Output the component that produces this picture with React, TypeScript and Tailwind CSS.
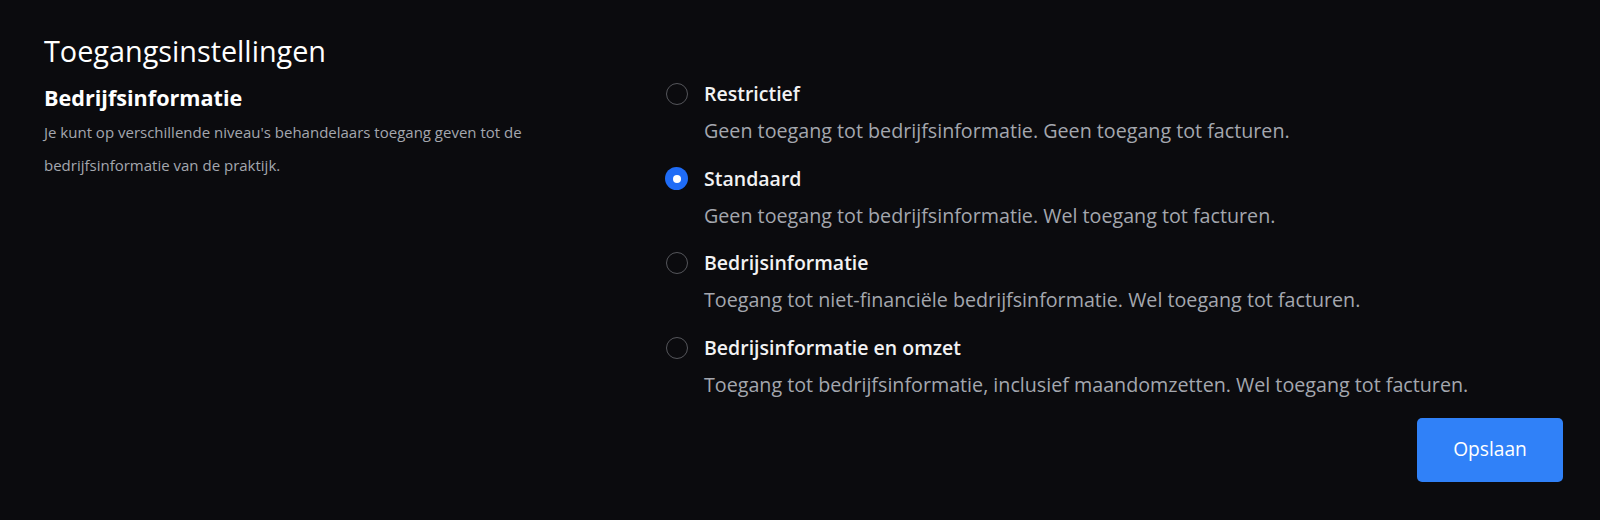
import { useState } from 'react'

const options = [
  { id: 'restrictief', label: 'Restrictief', desc: 'Geen toegang tot bedrijfsinformatie. Geen toegang tot facturen.' },
  { id: 'standaard', label: 'Standaard', desc: 'Geen toegang tot bedrijfsinformatie. Wel toegang tot facturen.' },
  { id: 'bedrijf', label: 'Bedrijsinformatie', desc: 'Toegang tot niet-financiële bedrijfsinformatie. Wel toegang tot facturen.' },
  { id: 'omzet', label: 'Bedrijsinformatie en omzet', desc: 'Toegang tot bedrijfsinformatie, inclusief maandomzetten. Wel toegang tot facturen.' },
]

export default function App() {
  const [level, setLevel] = useState('standaard')

  return (
    <main className="min-h-[520px] bg-[#0b0b0e] pt-[33px] pl-[44px] pr-[37px] text-white" style={{ fontFamily: '"Open Sans", "Noto Sans", sans-serif' }}>
      <h1 className="text-[28.8px] leading-9">Toegangsinstellingen</h1>

      <div className="mt-[11px] flex">
        {/* Links: uitleg */}
        <div className="w-[621px] shrink-0 pt-1">
          <h2 className="text-[21.6px] leading-7 font-bold">Bedrijfsinformatie</h2>
          <p className="mt-1 w-[540px] text-[15px] leading-[33px] text-[#a4a7ae]">
            Je kunt op verschillende niveau's behandelaars toegang geven tot de bedrijfsinformatie van de praktijk.
          </p>
        </div>

        {/* Rechts: keuzes */}
        <div className="flex-1">
          <div className="flex flex-col gap-[19.5px]">
            {options.map(o => {
              const checked = level === o.id
              return (
                <label key={o.id} className="flex cursor-pointer gap-[16px]" onClick={() => setLevel(o.id)}>
                  <span className="flex h-7 w-[23px] shrink-0 items-center justify-center">
                    {checked ? (
                      <span className="flex h-[23px] w-[23px] items-center justify-center rounded-full bg-[#1f6cf6]">
                        <span className="h-[8px] w-[8px] rounded-full bg-white" />
                      </span>
                    ) : (
                      <span className="h-[22px] w-[22px] rounded-full border-[1.5px] border-[#55565b]" />
                    )}
                  </span>
                  <span className="flex flex-col gap-[9px]">
                    <span className="text-[19.5px] leading-7 font-semibold text-[#f2f2f3]">{o.label}</span>
                    <span className="text-[19.7px] leading-7 text-[#a4a7ae]">{o.desc}</span>
                  </span>
                </label>
              )
            })}
          </div>

          <div className="mt-[19px] flex justify-end">
            <button className="h-[64px] w-[146px] rounded-[5px] bg-[#3081f8] text-[19.2px] text-white">Opslaan</button>
          </div>
        </div>
      </div>
    </main>
  )
}
